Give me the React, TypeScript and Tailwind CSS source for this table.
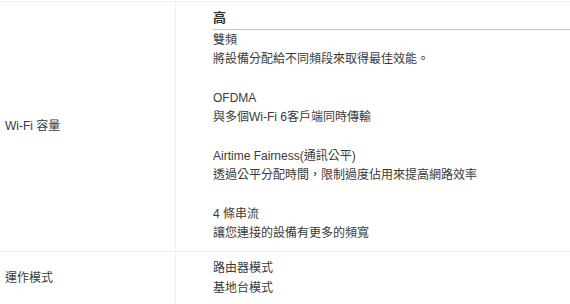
import React from 'react';

const features = [
  { title: '雙頻', desc: '將設備分配給不同頻段來取得最佳效能。' },
  { title: 'OFDMA', desc: '與多個Wi-Fi 6客戶端同時傳輸' },
  { title: 'Airtime Fairness(通訊公平)', desc: '透過公平分配時間，限制過度佔用來提高網路效率' },
  { title: '4 條串流', desc: '讓您連接的設備有更多的頻寬' },
];

const modes = ['路由器模式', '基地台模式'];

export default function App() {
  return (
    <div
      className="w-[570px] h-[304px] overflow-hidden bg-white pt-px text-[12px] leading-[19.3px] text-[#3a3a3a]"
      style={{ fontFamily: '"Liberation Sans", Arial, "Noto Sans CJK TC", sans-serif' }}
    >
      <div className="grid grid-cols-[176px_1fr] border-t border-[#f0f0f0]">
        <div className="flex items-center border-r border-[#f0f0f0] pl-[5px]">Wi-Fi 容量</div>
        <div className="pl-[37px] pt-[6px] pb-[8px]">
          <div className="border-b border-[#c4c4c4] pb-[2px] text-[13px] font-bold leading-[19px] text-[#333]">高</div>
          <div className="pt-px">
            {features.map((f, i) => (
              <div key={f.title} className={i > 0 ? 'mt-[19.3px]' : ''}>
                <div>{f.title}</div>
                <div>{f.desc}</div>
              </div>
            ))}
          </div>
        </div>

        <div className="flex items-center border-r border-t border-[#f0f0f0] pl-[5px]">運作模式</div>
        <div className="border-t border-[#f0f0f0] pl-[37px] pt-[7px] pb-[8px]">
          {modes.map((m) => (
            <div key={m}>{m}</div>
          ))}
        </div>
      </div>
    </div>
  );
}
